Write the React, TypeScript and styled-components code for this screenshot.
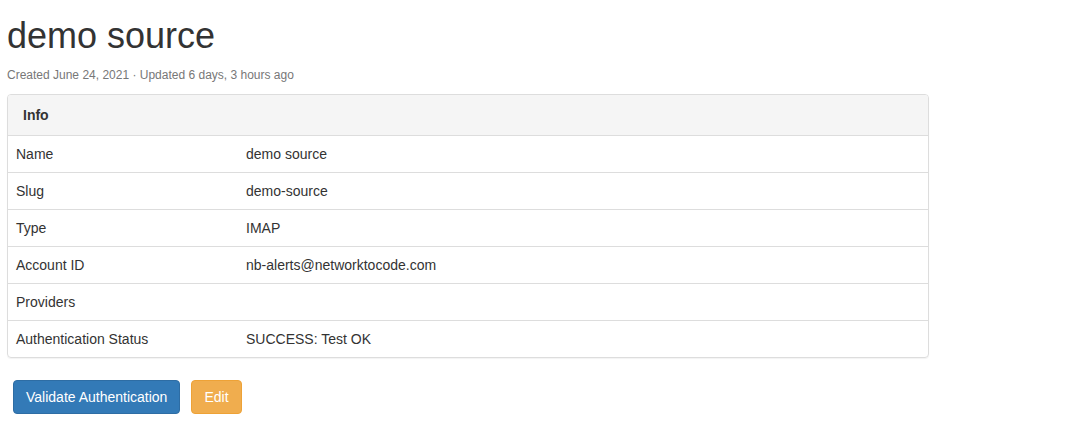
import styled, { createGlobalStyle } from 'styled-components';

const GlobalStyle = createGlobalStyle`
  body {
    margin: 0;
    background: #fff;
    font-family: "Liberation Sans", Arial, sans-serif;
    font-size: 14px;
    color: #333;
  }
`;

const Page = styled.main`
  padding: 0 7px;
`;

const Title = styled.h1`
  margin: 16px 0 0;
  font-size: 36px;
  font-weight: 400;
  line-height: 1.1;
  color: #333;
`;

const Meta = styled.div`
  margin-top: 10px;
  font-size: 12px;
  line-height: 18px;
  color: #777;
`;

const Panel = styled.section`
  width: 922px;
  box-sizing: border-box;
  margin-top: 10px;
  border: 1px solid #ddd;
  border-radius: 4px;
  box-shadow: 0 1px 1px rgba(0, 0, 0, 0.05);
  overflow: hidden;
`;

const PanelHeading = styled.div`
  padding: 10px 15px;
  line-height: 20px;
  background: #f5f5f5;
  border-bottom: 1px solid #ddd;
  font-weight: 700;
`;

const Table = styled.table`
  width: 100%;
  border-collapse: collapse;

  tr + tr td {
    border-top: 1px solid #ddd;
  }
`;

const Cell = styled.td<{ $label?: boolean }>`
  padding: 8px;
  line-height: 20px;
  vertical-align: top;
  width: ${({ $label }) => ($label ? '25%' : 'auto')};
`;

const Actions = styled.div`
  display: flex;
  gap: 11px;
  margin-top: 22px;
  padding-left: 6px;
`;

const Button = styled.button<{ $variant: 'primary' | 'warning' }>`
  font-family: inherit;
  font-size: 14px;
  line-height: 20px;
  padding: 6px 12px;
  border-radius: 4px;
  color: #fff;
  cursor: pointer;
  background: ${({ $variant }) => ($variant === 'primary' ? '#337ab7' : '#f0ad4e')};
  border: 1px solid ${({ $variant }) => ($variant === 'primary' ? '#2e6da4' : '#eea236')};
`;

const rows: [string, string][] = [
  ['Name', 'demo source'],
  ['Slug', 'demo-source'],
  ['Type', 'IMAP'],
  ['Account ID', 'nb-alerts@networktocode.com'],
  ['Providers', ''],
  ['Authentication Status', 'SUCCESS: Test OK'],
];

export default function App() {
  return (
    <>
      <GlobalStyle />
      <Page>
        <Title>demo source</Title>
        <Meta>Created June 24, 2021 · Updated 6 days, 3 hours ago</Meta>
        <Panel>
          <PanelHeading>Info</PanelHeading>
          <Table>
            <tbody>
              {rows.map(([label, value]) => (
                <tr key={label}>
                  <Cell $label>{label}</Cell>
                  <Cell>{value}</Cell>
                </tr>
              ))}
            </tbody>
          </Table>
        </Panel>
        <Actions>
          <Button $variant="primary">Validate Authentication</Button>
          <Button $variant="warning">Edit</Button>
        </Actions>
      </Page>
    </>
  );
}
